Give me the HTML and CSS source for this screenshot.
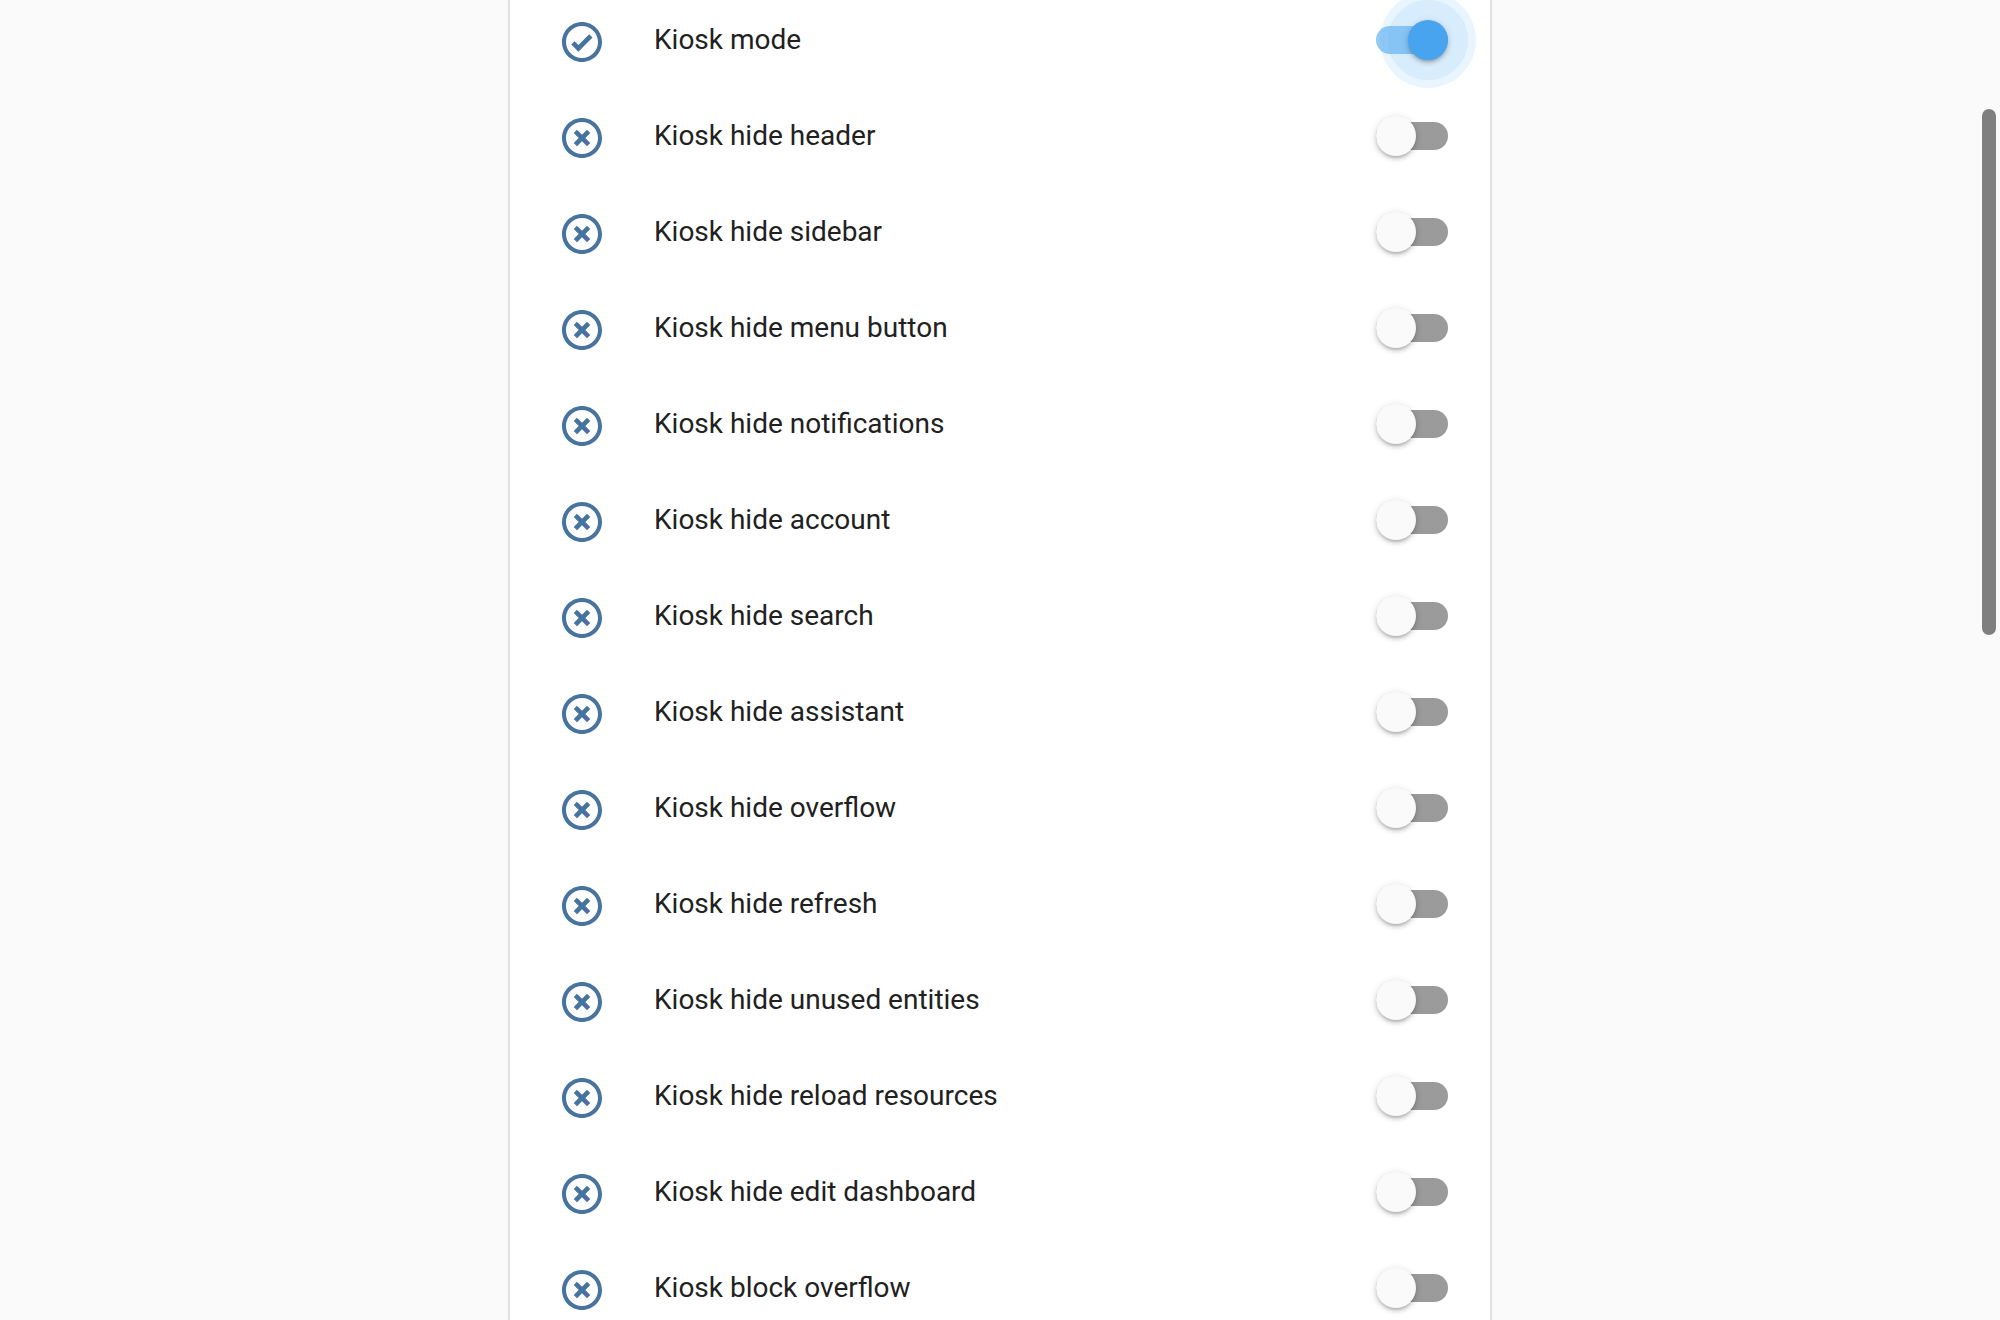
FILE: index.html
```html
<!DOCTYPE html>
<html lang="en">
	<head>
		<meta charset="UTF-8" />
		<title>Kiosk settings</title>
		<link rel="stylesheet" href="styles.css">
	</head>
	<body>
		<svg class="defs" width="0" height="0">
			<symbol id="icon-on" viewBox="0 0 24 24">
				<path d="M12 2C6.5 2 2 6.5 2 12S6.5 22 12 22 22 17.5 22 12 17.5 2 12 2M12 20C7.59 20 4 16.41 4 12S7.59 4 12 4 20 7.59 20 12 16.41 20 12 20Z" />
				<path d="M10.2 16.85L6.65 13.3L8.3 11.65L10.2 13.55L15.6 8.15L17.25 9.8Z" />
			</symbol>
			<symbol id="icon-off" viewBox="0 0 24 24">
				<path d="M12,20C7.59,20 4,16.41 4,12C4,7.59 7.59,4 12,4C16.41,4 20,7.59 20,12C20,16.41 16.41,20 12,20M12,2C6.47,2 2,6.47 2,12C2,17.53 6.47,22 12,22C17.53,22 22,17.53 22,12C22,6.47 17.53,2 12,2Z" />
				<path d="M14.5 7.85L12 10.35L9.5 7.85L7.85 9.5L10.35 12L7.85 14.5L9.5 16.15L12 13.65L14.5 16.15L16.15 14.5L13.65 12L16.15 9.5Z" />
			</symbol>
		</svg>

		<div class="card">
			<div class="row">
				<svg class="icon"><use href="#icon-on" /></svg>
				<span class="name">Kiosk mode</span>
				<div class="switch on"><div class="thumb"></div></div>
			</div>
			<div class="row">
				<svg class="icon"><use href="#icon-off" /></svg>
				<span class="name">Kiosk hide header</span>
				<div class="switch"><div class="thumb"></div></div>
			</div>
			<div class="row">
				<svg class="icon"><use href="#icon-off" /></svg>
				<span class="name">Kiosk hide sidebar</span>
				<div class="switch"><div class="thumb"></div></div>
			</div>
			<div class="row">
				<svg class="icon"><use href="#icon-off" /></svg>
				<span class="name">Kiosk hide menu button</span>
				<div class="switch"><div class="thumb"></div></div>
			</div>
			<div class="row">
				<svg class="icon"><use href="#icon-off" /></svg>
				<span class="name">Kiosk hide notifications</span>
				<div class="switch"><div class="thumb"></div></div>
			</div>
			<div class="row">
				<svg class="icon"><use href="#icon-off" /></svg>
				<span class="name">Kiosk hide account</span>
				<div class="switch"><div class="thumb"></div></div>
			</div>
			<div class="row">
				<svg class="icon"><use href="#icon-off" /></svg>
				<span class="name">Kiosk hide search</span>
				<div class="switch"><div class="thumb"></div></div>
			</div>
			<div class="row">
				<svg class="icon"><use href="#icon-off" /></svg>
				<span class="name">Kiosk hide assistant</span>
				<div class="switch"><div class="thumb"></div></div>
			</div>
			<div class="row">
				<svg class="icon"><use href="#icon-off" /></svg>
				<span class="name">Kiosk hide overflow</span>
				<div class="switch"><div class="thumb"></div></div>
			</div>
			<div class="row">
				<svg class="icon"><use href="#icon-off" /></svg>
				<span class="name">Kiosk hide refresh</span>
				<div class="switch"><div class="thumb"></div></div>
			</div>
			<div class="row">
				<svg class="icon"><use href="#icon-off" /></svg>
				<span class="name">Kiosk hide unused entities</span>
				<div class="switch"><div class="thumb"></div></div>
			</div>
			<div class="row">
				<svg class="icon"><use href="#icon-off" /></svg>
				<span class="name">Kiosk hide reload resources</span>
				<div class="switch"><div class="thumb"></div></div>
			</div>
			<div class="row">
				<svg class="icon"><use href="#icon-off" /></svg>
				<span class="name">Kiosk hide edit dashboard</span>
				<div class="switch"><div class="thumb"></div></div>
			</div>
			<div class="row">
				<svg class="icon"><use href="#icon-off" /></svg>
				<span class="name">Kiosk block overflow</span>
				<div class="switch"><div class="thumb"></div></div>
			</div>
		</div>

		<div class="scrollbar"></div>
	</body>
</html>
```

FILE: styles.css
```css
html,
body {
	height: 100%;
}

body {
	margin: 0;
	overflow: hidden;
	background-color: #fafafa;
	font-family: Roboto, "Liberation Sans", sans-serif;
	color: #212121;
}

.defs {
	display: block;
	height: 0;
}

.card {
	position: relative;
	z-index: 0;
	box-sizing: border-box;
	width: 984px;
	margin: -8px 0 0 508px;
	border-left: 2px solid #e0e0e0;
	border-right: 2px solid #e0e0e0;
	background-color: white;
	padding: 0 42px 0 48px;
}

.row {
	display: flex;
	align-items: center;
	height: 96px;
}

.icon {
	flex: none;
	width: 48px;
	height: 48px;
	margin-top: 4px;
	fill: #47739f;
}

.name {
	flex: 1;
	margin: 0 0 2px 48px;
	font-size: 28px;
}

.switch {
	position: relative;
	flex: none;
	width: 72px;
	height: 28px;
	border-radius: 14px;
	background-color: #9b9b9b;
}

.thumb {
	position: absolute;
	top: -6px;
	left: 0;
	width: 40px;
	height: 40px;
	border-radius: 50%;
	background-color: #fafafa;
	box-shadow: 0 3px 3px -2px rgba(0, 0, 0, 0.2), 0 3px 4px rgba(0, 0, 0, 0.14), 0 1px 8px rgba(0, 0, 0, 0.12);
}

.switch.on {
	background-color: rgba(81, 171, 239, 0.615);
}

.switch.on .thumb {
	left: 32px;
	background-color: #48a4ee;
}

/* focus ripple behind the track */
.switch.on::before {
	content: "";
	position: absolute;
	z-index: -1;
	top: -34px;
	left: 4px;
	width: 96px;
	height: 96px;
	border-radius: 50%;
	background: radial-gradient(circle closest-side, rgba(3, 137, 240, 0.155) 83%, rgba(3, 137, 240, 0.087) 84%);
}

.scrollbar {
	position: absolute;
	top: 109px;
	left: 1982px;
	width: 14px;
	height: 526px;
	border-radius: 7px;
	background-color: #7f7f7f;
}
```
